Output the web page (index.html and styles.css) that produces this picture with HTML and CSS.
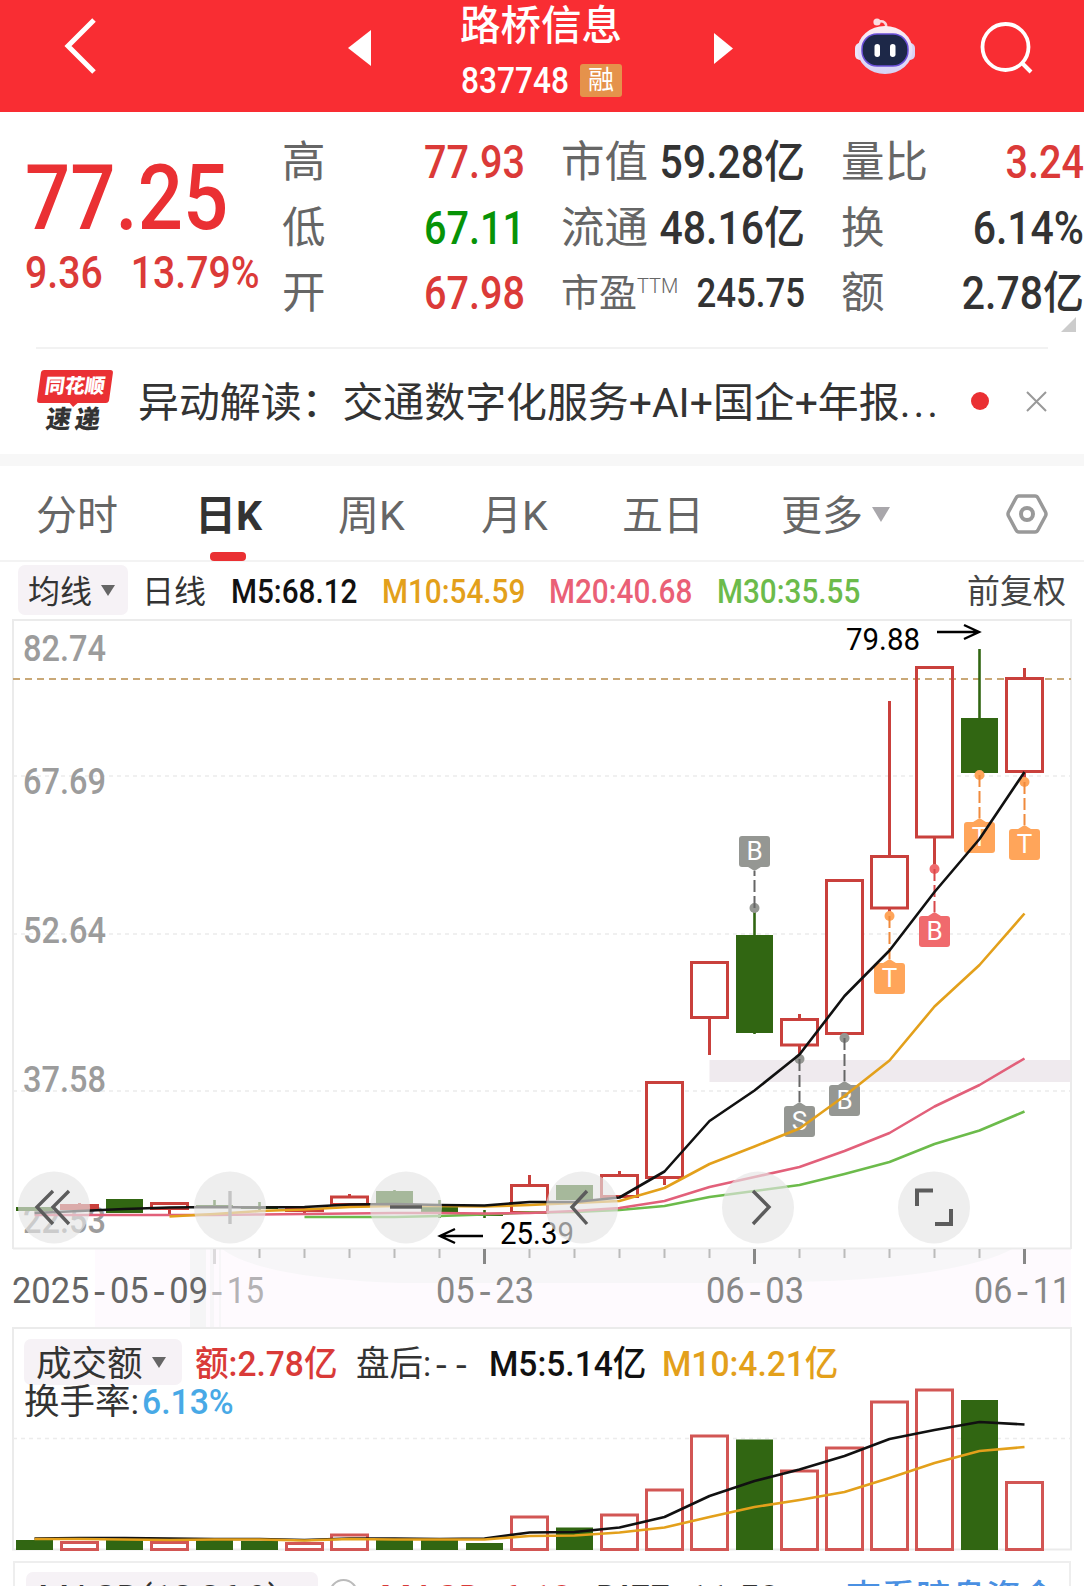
FILE: index.html
```html
<!DOCTYPE html>
<html lang="zh-CN">
  <head>
    <meta charset="UTF-8" />
    <meta name="viewport" content="width=device-width, initial-scale=1.0" />
    <title>路桥信息 837748</title>
    <link rel="stylesheet" href="styles.css">
  </head>

  <body>
    <header class="header">
      <svg class="back" width="40" height="60" viewBox="0 0 40 60">
        <path d="M34 4 L8 30 L34 56" fill="none" stroke="#fff" stroke-width="5" />
      </svg>
      <svg class="prev" width="23" height="36" viewBox="0 0 23 36">
        <path d="M23 0 V36 L0 18 Z" fill="#fff" />
      </svg>
      <div class="stock">
        <h1 class="stock-name">路桥信息</h1>
        <div class="stock-code">
          <span class="code">837748</span>
          <span class="badge">融</span>
        </div>
      </div>
      <svg class="next" width="19" height="31" viewBox="0 0 19 31">
        <path d="M0 0 V31 L19 15.5 Z" fill="#fff" />
      </svg>
      <svg class="robot" width="64" height="60" viewBox="0 0 64 60">
        <defs>
          <linearGradient id="shell" x1="0" y1="0" x2="0" y2="1">
            <stop offset="0" stop-color="#fdeef2" />
            <stop offset="0.6" stop-color="#e4dcf8" />
            <stop offset="1" stop-color="#d5d3f5" />
          </linearGradient>
        </defs>
        <path d="M24 7 C31 5 34 8 33 13" fill="none" stroke="#fbd5dc" stroke-width="2.5" />
        <circle cx="24" cy="7" r="3.6" fill="#fbdde2" />
        <rect x="2" y="28" width="10" height="17" rx="5" fill="#ece6f8" />
        <rect x="52" y="28" width="10" height="17" rx="5" fill="#d9d2f5" />
        <ellipse cx="32" cy="35" rx="27.500" ry="24" fill="url(#shell)" />
        <rect x="9" y="19" width="46" height="32" rx="15" fill="#1d2848" stroke="#6b50d8" stroke-width="1.500" />
        <rect x="21.5" y="29" width="5.5" height="13" rx="2.750" fill="#fff" />
        <rect x="37" y="29" width="5.5" height="13" rx="2.750" fill="#fff" />
      </svg>
      <svg class="search" width="56" height="56" viewBox="0 0 56 56">
        <circle cx="26.500" cy="28" r="23" fill="none" stroke="#fff" stroke-width="3.800" />
        <path d="M42.500 43.500 L52 53" stroke="#fff" stroke-width="4" />
      </svg>
    </header>

    <section class="quote">
      <div class="price">
        <div class="price-now">77.25</div>
        <div class="price-diff">
          <span class="diff">9.36</span>
          <span class="diff">13.79%</span>
        </div>
      </div>
      <dl class="stats stats-a">
        <dt>高</dt><dd class="up">77.93</dd>
        <dt>低</dt><dd class="down">67.11</dd>
        <dt>开</dt><dd class="up">67.98</dd>
      </dl>
      <dl class="stats stats-b">
        <dt>市值</dt><dd>59.28亿</dd>
        <dt>流通</dt><dd>48.16亿</dd>
        <dt class="small">市盈<sup>TTM</sup></dt><dd class="small">245.75</dd>
      </dl>
      <dl class="stats stats-c">
        <dt>量比</dt><dd class="up">3.24</dd>
        <dt>换</dt><dd>6.14%</dd>
        <dt>额</dt><dd>2.78亿</dd>
      </dl>
      <i class="corner"></i>
    </section>

    <section class="news">
      <div class="news-logo">
        <span class="logo-top"><b>同花顺</b></span>
        <span class="logo-bottom">速递</span>
      </div>
      <p class="news-text">异动解读：交通数字化服务+AI+国企+年报<span class="dots">...</span></p>
      <i class="news-dot"></i>
      <svg class="news-close" width="21" height="21" viewBox="0 0 21 21">
        <path d="M1 1 L20 20 M20 1 L1 20" stroke="#999" stroke-width="2" />
      </svg>
    </section>

    <nav class="tabs">
      <a class="tab">分时</a>
      <a class="tab active">日K</a>
      <a class="tab">周K</a>
      <a class="tab">月K</a>
      <a class="tab">五日</a>
      <a class="tab more">更多<i class="caret caret-light"></i></a>
      <svg class="setting" width="42" height="40" viewBox="0 0 42 40">
        <path d="M13 2 H29 Q31 2 32 4 L39.500 18 Q40.500 20 39.500 22 L32 36 Q31 38 29 38 H13 Q11 38 10 36 L2.500 22 Q1.500 20 2.500 18 L10 4 Q11 2 13 2 Z" fill="none" stroke="#999" stroke-width="3.500" />
        <circle cx="21" cy="20" r="6" fill="none" stroke="#999" stroke-width="4" />
      </svg>
    </nav>

    <div class="legend">
      <span class="pill">均线<i class="caret"></i></span>
      <span class="legend-name">日线</span>
      <span class="ma ma5">M5:68.12</span>
      <span class="ma ma10">M10:54.59</span>
      <span class="ma ma20">M20:40.68</span>
      <span class="ma ma30">M30:35.55</span>
      <span class="adjust">前复权</span>
    </div>

    <svg class="kline" id="kline" width="1084" height="708" viewBox="0 619 1084 708"></svg>

    <section class="volume">
      <svg class="volume-chart" id="volume" width="1084" height="234" viewBox="0 1327 1084 234"></svg>
      <div class="volume-legend">
        <span class="pill">成交额<i class="caret"></i></span>
        <span class="vol vol-amount">额:2.78亿</span>
        <span class="vol vol-after">盘后:<span class="dash">--</span></span>
        <span class="vol vol-ma5">M5:5.14亿</span>
        <span class="vol vol-ma10">M10:4.21亿</span>
      </div>
      <div class="turnover">换手率:<span>6.13%</span></div>
    </section>

    <section class="macd">
      <span class="pill">MACD(12,26,9)</span>
      <i class="help"></i>
      <span class="macd-value">MACD: 6.10</span>
      <span class="macd-diff">DIFF: 11.50</span>
      <a class="macd-link">查看暗盘资金</a>
    </section>

    <script src="chart.js"></script>
  </body>
</html>
```
FILE: styles.css
```css
* {
  box-sizing: border-box;
}

body {
  margin: 0;
  width: 1084px;
  height: 1586px;
  overflow: hidden;
  background: #fff;
  color: #333;
  font-family: Roboto, "Noto Sans CJK SC", sans-serif;
}

svg {
  display: block;
  flex: none;
}

.header {
  display: flex;
  align-items: flex-start;
  height: 112px;
  background: #f92d33;
  color: #fff;
}
.back {
  margin: 16px 0 0 60px;
}
.prev {
  margin: 30px 0 0 248px;
}
.stock {
  width: 170px;
  margin-left: 89px;
}
.stock-name {
  margin: 0;
  font-size: 40.5px;
  font-weight: 500;
  line-height: 52px;
  white-space: nowrap;
}
.stock-code {
  display: flex;
  margin-top: 12px;
}
.code {
  width: 120px;
  margin-left: 1px;
  margin-right: -1px;
  font-size: 36px;
  font-weight: 500;
  line-height: 34px;
  transform: scaleX(0.88);
  transform-origin: left;
}
.badge {
  flex: none;
  width: 42px;
  height: 33px;
  border-radius: 3px;
  background: #e5924b;
  font-size: 26px;
  line-height: 33px;
  text-align: center;
}
.next {
  margin: 33px 0 0 84px;
}
.robot {
  margin: 15px 0 0 120px;
}
.search {
  margin: 19px 0 0 62px;
}

.quote {
  position: relative;
  display: flex;
  height: 235px;
  padding-top: 18px;
}
.price {
  width: 282px;
  padding-left: 25px;
  color: #ea3033;
}
.price-now {
  margin-top: 18px;
  font-size: 90px;
  font-weight: 500;
  line-height: 102px;
  transform: scaleX(0.885);
  transform-origin: left;
}
.price-diff {
  display: flex;
  gap: 32px;
  color: #db3a38;
  font-size: 44.5px;
  font-weight: 500;
  line-height: 46px;
  transform: scaleX(0.88);
  transform-origin: left;
}
.stats {
  display: grid;
  grid-template-columns: 80px minmax(0, 1fr);
  grid-auto-rows: 65.5px;
  margin: 0;
  line-height: 65.5px;
  white-space: nowrap;
}
.stats dt {
  color: #666;
  font-size: 43.5px;
  font-weight: 400;
}
.stats dd {
  margin: 0;
  font-size: 45.5px;
  font-weight: 500;
  text-align: right;
  transform: scaleX(0.9);
  transform-origin: right;
}
.stats .small {
  font-size: 38px;
}
.stats dd.small {
  font-size: 40px;
  transform: scaleX(0.87);
}
.stats .up,
.stats .down {
  color: #db3a38;
  transform: scaleX(0.87);
}
.stats .down {
  color: #079307;
}
.stats sup {
  display: inline-block;
  font-size: 20px;
  font-weight: 300;
  line-height: 1;
  vertical-align: 13px;
}
.stats-a {
  width: 243px;
}
.stats-b {
  width: 244px;
  margin-left: 36px;
}
.stats-c {
  width: 243px;
  margin-left: 36px;
}
.corner {
  position: absolute;
  right: 8px;
  bottom: 15px;
  border-left: 15px solid transparent;
  border-bottom: 15px solid #ccc;
}

.news {
  display: flex;
  align-items: center;
  height: 119px;
  padding: 0 36px;
  border-bottom: 12px solid #f7f7f7;
  background: linear-gradient(#f2f2f2, #f2f2f2) 36px 0 / 1012px 2px no-repeat;
}
.news-logo {
  width: 76px;
  height: 64px;
  margin-right: 26px;
}
.logo-top {
  position: relative;
  display: block;
  width: 72px;
  height: 33px;
  margin-top: 1px;
  margin-left: 3px;
  border-radius: 3px;
  background: #ea3033;
  color: #fff;
  font-size: 20px;
  line-height: 33px;
  text-align: center;
  transform: skewX(-8deg);
}
.logo-top b {
  font-weight: 900;
}
.logo-top::after {
  content: "";
  position: absolute;
  left: 32px;
  top: 32px;
  border: 5px solid transparent;
  border-top-color: #ea3033;
  border-bottom: 0;
}
.logo-bottom {
  display: block;
  margin-left: 10px;
  font-size: 25px;
  font-weight: 900;
  letter-spacing: 4px;
  line-height: 34px;
  transform: skewX(-8deg);
}
.news-text {
  width: 833px;
  margin: 0;
  padding-top: 4px;
  font-size: 40.9px;
  font-weight: 400;
  line-height: 60px;
  white-space: nowrap;
}
.dots {
  letter-spacing: 3px;
}
.news-dot {
  flex: none;
  width: 18px;
  height: 18px;
  border-radius: 50%;
  background: #ea3033;
}
.news-close {
  margin: 2px 0 0 37px;
}

.tabs {
  display: flex;
  height: 96px;
  padding-left: 36px;
  border-bottom: 2px solid #f3f3f3;
  color: #666;
  font-size: 41px;
  line-height: 100px;
  white-space: nowrap;
}
.tab {
  position: relative;
  width: 143px;
}
.tab:first-child {
  width: 159px;
}
.tab.active {
  color: #333;
  font-weight: 700;
}
.tab.active::after {
  content: "";
  position: absolute;
  left: 15px;
  bottom: -1px;
  width: 36px;
  height: 9px;
  border-radius: 4px;
  background: #ea3033;
}
.tab:nth-child(4) {
  width: 141px;
}
.tab:nth-child(5) {
  width: 159px;
}
.tab.more {
  width: 225px;
}
.setting {
  margin-top: 28px;
}

.caret {
  display: inline-block;
  margin-left: 9px;
  border: 7.5px solid transparent;
  border-top: 11px solid #666;
  border-bottom: 0;
  vertical-align: 7px;
}
.caret-light {
  border-width: 15px 9px 0;
  border-top-color: #a9a7ab;
  vertical-align: 8px;
}
.pill {
  flex: none;
  border-radius: 7px;
  background: #f6f2f6;
  white-space: nowrap;
}

.legend {
  display: flex;
  align-items: flex-start;
  height: 57px;
  padding: 3px 0 0 18px;
  font-size: 32px;
  line-height: 54px;
  white-space: nowrap;
}
.legend .pill {
  width: 110px;
  height: 50px;
  padding-left: 10px;
}
.legend-name {
  width: 103px;
  padding-left: 14px;
}
.ma {
  width: 167px;
  font-size: 33px;
  font-weight: 500;
  transform: scaleX(0.9);
  transform-origin: left;
}
.ma5 {
  width: 151px;
  color: #111;
}
.ma10 {
  color: #e3a01b;
}
.ma20 {
  width: 168px;
  color: #ea6076;
}
.ma30 {
  width: 250px;
  color: #6cbb4b;
}
.adjust {
  font-size: 33px;
  color: #444;
}

.kline .axis {
  fill: #9c9c9c;
  font-size: 36px;
  font-weight: 500;
}
.kline .date {
  fill: #888;
  font-size: 36px;
}
.kline .mark {
  fill: #fff;
  font-size: 26px;
  text-anchor: middle;
}
.kline .peak {
  fill: #000;
  font-size: 31px;
}
.dash {
  font-family: "Liberation Mono", monospace;
}

.volume {
  position: relative;
  height: 234px;
}
.volume-legend,
.turnover {
  position: absolute;
  left: 24px;
  font-size: 35.5px;
  white-space: nowrap;
}
.volume-legend {
  display: flex;
  top: 12px;
  line-height: 50px;
}
.volume-legend .pill {
  width: 158px;
  height: 46px;
  padding-left: 12px;
}
.volume .caret {
  vertical-align: 8px;
}
.vol {
  font-weight: 500;
  transform: scaleX(0.945);
  transform-origin: left;
}
.vol-amount {
  width: 161px;
  margin-left: 13px;
  color: #d93a38;
}
.vol-after {
  width: 133px;
  font-weight: 400;
}
.vol-ma5 {
  width: 173px;
  color: #111;
}
.vol-ma10 {
  color: #e3a01b;
}
.turnover {
  top: 52px;
  line-height: 46px;
}
.turnover span {
  display: inline-block;
  margin-left: 3px;
  color: #48a9e6;
  font-weight: 500;
  transform: scaleX(0.95);
  transform-origin: left;
}

.macd {
  display: flex;
  height: 60px;
  margin: 0 13px;
  padding: 9px 0 0 11px;
  border: 2px solid #eee;
  font-size: 36px;
  font-weight: 500;
  line-height: 54px;
  white-space: nowrap;
}
.macd .pill {
  width: 292px;
  height: 50px;
  padding-left: 12px;
  font-weight: 400;
}
.help {
  flex: none;
  width: 29px;
  height: 29px;
  margin: 7px 22px 0 11px;
  border: 2px solid #bbb;
  border-radius: 50%;
}
.macd-value {
  width: 216px;
  color: #d93a38;
}
.macd-diff {
  width: 250px;
}
.macd-link {
  color: #4a90e2;
  font-size: 35px;
}
```
FILE: chart.js
```js
const RED = "#c9403c";
const GREEN = "#316612";
const GRAY = "#959793";
const ORANGE = "#ffa55a";
const PINK = "#f06a6d";

// one slot per trading day
const slot = (i) => 34.5 + i * 45;

// [up, body top, body bottom, high, low]
const candles = [
  [0, 1207, 1211, 1207, 1211],
  [1, 1204, 1210, 1203, 1210],
  [0, 1199, 1213, 1199, 1213],
  [1, 1202, 1210, 1202, 1215],
  [0, 1205, 1207, 1200, 1207],
  [0, 1206, 1209, 1202, 1212],
  [1, 1208, 1211, 1208, 1214],
  [1, 1195.5, 1206, 1194, 1208],
  [0, 1191, 1204, 1190, 1204],
  [0, 1207, 1213, 1200, 1218],
  [0, 1214, 1216, 1210, 1218],
  [1, 1184, 1214, 1175, 1214],
  [0, 1185, 1200, 1185, 1200],
  [1, 1174, 1198, 1171, 1198],
  [1, 1081, 1179, 1081, 1185],
  [1, 961, 1019, 961, 1055],
  [0, 935, 1033, 908, 1034],
  [1, 1018, 1046.5, 1014, 1060],
  [1, 879, 1035, 879, 1038],
  [1, 855, 909.5, 701, 915],
  [1, 666, 838.5, 666, 868],
  [0, 718, 773, 649, 773],
  [1, 677, 773, 668, 782],
];

const averages = [
  ["#6cbb4b", 6, [1217, 1217, 1217, 1216, 1214.5, 1212.5, 1212, 1210, 1206, 1197, 1191, 1185, 1174, 1162, 1144, 1130.5, 1111.5]],
  ["#e2607a", 0, [1215, 1215, 1215, 1215, 1215, 1214.5, 1214, 1213.5, 1213, 1213, 1213.5, 1213, 1211, 1208, 1201, 1187, 1177, 1167, 1151, 1133, 1106.5, 1085, 1058.5]],
  ["#e3a01b", 3, [1216.5, 1214, 1211, 1209.5, 1207, 1206, 1206, 1206.5, 1205, 1203, 1201, 1188, 1164, 1146.5, 1128.5, 1096, 1060.5, 1006.5, 965, 913.5]],
  ["#111", 0, [1213, 1211, 1209, 1207.5, 1207, 1207.5, 1207, 1204.5, 1204, 1205, 1205.5, 1202, 1202, 1197.5, 1171.5, 1121, 1090.5, 1054.5, 996, 950.5, 892, 839, 772]],
];

// [slot, letter, color, box top, dot y]
const marks = [
  [16, "B", GRAY, 836, 908],
  [17, "S", GRAY, 1106, 1059],
  [18, "B", GRAY, 1085, 1038],
  [19, "T", ORANGE, 963, 916],
  [20, "B", PINK, 916, 869],
  [21, "T", ORANGE, 822, 775],
  [22, "T", ORANGE, 829, 782],
];

const volumes = [
  [0, 1540], [1, 1541], [0, 1540], [1, 1541], [0, 1540], [0, 1541], [1, 1542], [1, 1533.5],
  [0, 1540], [0, 1540], [0, 1543], [1, 1515.5], [0, 1527.5], [1, 1513.5], [1, 1488.5], [1, 1434.5],
  [0, 1439.5], [1, 1469.5], [1, 1446.5], [1, 1400.5], [1, 1388.5], [0, 1400], [1, 1481],
];

const volumeAverages = [
  ["#111", 0, [1538.5, 1538, 1538, 1538.5, 1539, 1539, 1540, 1538.5, 1538.5, 1539, 1538.5, 1532.5, 1532, 1527.5, 1517, 1496, 1481, 1469.5, 1456, 1439, 1430, 1422, 1424.5]],
  ["#e3a01b", 0, [1539, 1539, 1539.5, 1540, 1539.5, 1539.5, 1540.5, 1539, 1539.5, 1539.5, 1539.5, 1536, 1535.5, 1532.5, 1527.5, 1517, 1507, 1500, 1492, 1478, 1463, 1451, 1447]],
];

function rect(x, y, w, h, fill, rest = "") {
  return `<rect x="${x}" y="${y}" width="${w}" height="${h}" fill="${fill}" ${rest}/>`;
}

function path(d, color, width, rest = "") {
  return `<path d="${d}" fill="none" stroke="${color}" stroke-width="${width}" ${rest}/>`;
}

function label(cls, x, baseline, width, text, rest = "") {
  return `<text class="${cls}" x="${x}" y="${baseline}" textLength="${width}" lengthAdjust="spacingAndGlyphs" ${rest}>${text}</text>`;
}

// dates use the wider monospace hyphen
function date(x, width, text, rest) {
  return label("date", x, 1303, width, text.replace(/-/g, '<tspan class="dash">-</tspan>'), rest);
}

function line([color, start, points]) {
  const d = points.map((y, i) => `${i ? "L" : "M"}${slot(start + i)} ${y}`).join(" ");
  return path(d, color, 2.6, 'stroke-linejoin="round"');
}

function body(x, up, top, bottom, color) {
  if (!up) return rect(x - 18.5, top, 37, bottom - top, GREEN);
  return rect(x - 18, top + 1.5, 36, Math.max(bottom - top - 3, 1), "#fff", `stroke="${color}" stroke-width="3"`);
}

function drawKline() {
  let out = "";

  // soft shading behind the date axis
  out += rect(95, 1249, 976, 78, "#fefafe");
  out += `<path d="M222 1249 H1012 Q990 1262 930 1272 Q850 1284 700 1283 H400 Q260 1278 222 1249 Z" fill="#f7f6f8"/>`;
  out += rect(190, 1249, 16, 78, "#f5f5f6") + rect(210, 1249, 4, 78, "#f7f6f8") + rect(219, 1249, 2, 78, "#f7f6f8");

  for (const y of [776, 934, 1091]) out += path(`M13 ${y} H1071`, "#ececec", 1.6, 'stroke-dasharray="4 4"');
  out += path("M13 620 H1071 M13 1248.500 H1071", "#ebebeb", 2);
  out += path("M13 619 V1249 M1071 619 V1249", "#ebebeb", 2);
  out += rect(709.5, 1060, 361, 22, "#efeaee");

  for (let i = 4; i < 23; i++) {
    const major = (i - 4) % 6 === 0;
    const color = i === 4 ? "#dcdadc" : major ? "#888" : "#bbb";
    out += path(`M${slot(i)} 1249 V${major ? 1264 : 1258}`, color, major ? 3 : 2);
  }

  const axis = [["82.74", 660.5], ["67.69", 793.5], ["52.64", 942.5], ["37.58", 1091.5], ["22.53", 1232.5]];
  for (const [text, y] of axis) out += label("axis", 23, y, 83, text);

  out += path("M13 679 H1071", "#c9a877", 2, 'stroke-dasharray="7 5"');
  candles.forEach(([up, top, bottom, high, low], i) => {
    const x = slot(i);
    out += path(`M${x} ${high} V${low}`, up ? RED : GREEN, up ? 3 : 2.6);
    out += body(x, up, top, bottom, RED);
  });
  out += path("M918 679 H951", "#c9a877", 2, 'stroke-dasharray="7 5" stroke-dashoffset="5"');

  for (const [i, letter, color, top, dot] of marks) {
    const x = slot(i);
    const above = top < dot && dot - top > 60;
    const tip = above ? top + 35 : top - 4;
    const base = above ? top + 30 : top + 1;
    const dash = color === GRAY ? "#666" : color === PINK ? "#d9484a" : "#f08a3c";
    out += `<circle cx="${x}" cy="${dot}" r="5" fill="${color}"/>`;
    out += path(`M${x} ${dot} V${tip}`, dash, 2, 'stroke-dasharray="12 4"');
    out += `<path d="M${x - 8} ${base} L${x} ${tip} L${x + 8} ${base} Z" fill="${color}"/>`;
    out += rect(x - 15.5, top, 31, 31, color, 'rx="3"');
    out += `<text class="mark" x="${x}" y="${top + 24}">${letter}</text>`;
  }

  out += averages.map(line).join("");

  out += label("peak", 846, 649.5, 74, "79.88");
  out += path("M937 632 H979 M964 625 L979 632 L964 639", "#000", 2.4);
  out += label("peak", 500, 1243.5, 74, "25.39");
  out += path("M483 1236 H440 M455 1229 L440 1236 L455 1243", "#000", 2.4);

  const icons = [
    "M53 1191 L37 1207 L53 1224 M69 1191 L53 1207 L69 1224",
    "M230 1191 V1224",
    "M390 1207 H422",
    "M587 1191 L572 1207 L587 1224",
    "M753 1191 L769 1207 L753 1224",
    "M917 1206 V1190.500 H933 M951 1209 V1224 H935",
  ];
  icons.forEach((d, i) => {
    out += `<circle cx="${54 + i * 176}" cy="1207.500" r="36" fill="#e5e5e5" fill-opacity="0.65"/>`;
    out += path(d, i === 1 ? "#c4c4c4" : "#5c5c5c", i === 5 ? 4 : 3.4);
  });

  out += date(12, 196, "2025-05-09", 'style="fill:#666"');
  out += date(207, 57, "-15", 'style="fill:#b4b2b5"');
  out += date(436, 98, "05-23");
  out += date(706, 98, "06-03");
  out += date(974, 97, "06-11");

  document.getElementById("kline").innerHTML = out;
}

function drawVolume() {
  let out = path("M13 1328 H1071 V1549.500 H13 Z", "#ebebeb", 2);
  out += path("M13 1438.500 H1071", "#ececec", 1.6, 'stroke-dasharray="4 4"');
  volumes.forEach(([up, top], i) => {
    out += body(slot(i), up, top, up ? 1551 : 1550, "#d25654");
  });
  out += volumeAverages.map(line).join("");
  document.getElementById("volume").innerHTML = out;
}

drawKline();
drawVolume();
```
